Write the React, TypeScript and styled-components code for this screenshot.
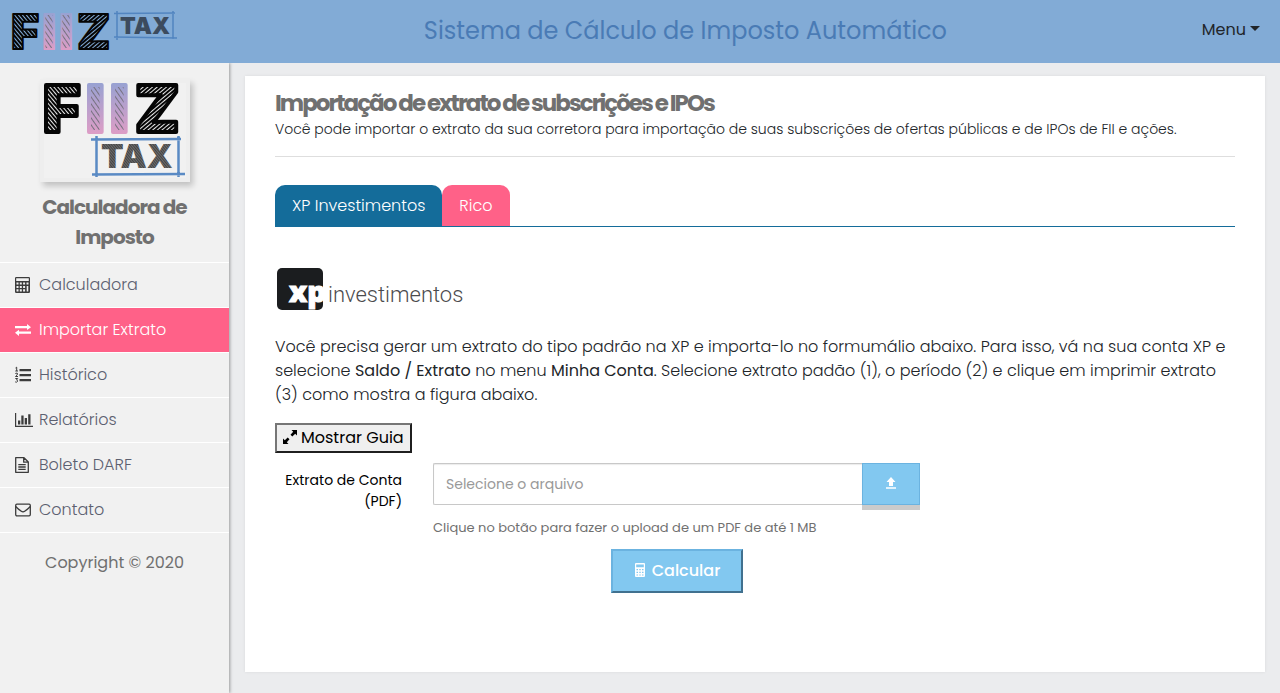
import React from "react";
import styled, { createGlobalStyle } from "styled-components";

const GlobalStyle = createGlobalStyle`
  *, *::before, *::after { box-sizing: border-box; }
  body {
    margin: 0;
    background: #ebecee;
    color: #212529;
    font-family: Poppins, Inter, "Open Sans", sans-serif;
    font-size: 16px;
    line-height: 24px;
  }
  button, input { font-family: inherit; }
`;

const Page = styled.div`
  display: flex;
  flex-direction: column;
  min-height: 100vh;
`;

const TopBar = styled.header`
  display: flex;
  align-items: center;
  height: 63px;
  padding: 0 20px 0 11px;
  background: #82abd6;
`;

const Brand = styled.a`
  display: flex;
`;

const SystemTitle = styled.div`
  flex: 1;
  padding: 0 10px 2px 0;
  text-align: center;
  font-size: 24px;
  line-height: 32px;
  color: #4a7bb5;
`;

const MenuButton = styled.button`
  display: flex;
  align-items: center;
  gap: 4px;
  padding: 0 0 4px;
  border: 0;
  background: none;
  color: #212529;
  font-size: 16px;
  line-height: 24px;

  &::after {
    content: "";
    margin-bottom: 2px;
    border: 5px solid transparent;
    border-top-color: currentColor;
    border-bottom: 0;
  }
`;

const Body = styled.div`
  display: flex;
  flex: 1;
`;

const Sidebar = styled.aside`
  flex: 0 0 229px;
  background: #f1f1f1;
  box-shadow: 1px 0 3px rgba(0, 0, 0, 0.35);
  clip-path: inset(0 -6px 0 0);
  text-align: center;
`;

const LogoCard = styled.div`
  width: 150px;
  height: 103px;
  margin: 16px auto 10px;
  background: #eeeeee;
  box-shadow: 3px 4px 6px rgba(0, 0, 0, 0.2);
`;

const SidebarTitle = styled.h2`
  margin: 0 30px 10px;
  font-size: 20px;
  font-weight: 700;
  line-height: 30px;
  letter-spacing: -1px;
  color: #707070;
`;

const NavList = styled.ul`
  margin: 0;
  padding: 0;
  list-style: none;
  border-top: 1px solid #ffffff;
`;

const NavLink = styled.a<{ $active?: boolean }>`
  display: flex;
  align-items: center;
  gap: 4px;
  height: 45px;
  padding-left: 15px;
  border-bottom: 1px solid #ffffff;
  background: ${(p) => (p.$active ? "#ff6188" : "transparent")};
  color: ${(p) => (p.$active ? "#ffffff" : "#5c6070")};
  font-size: 16px;
  font-weight: 300;
  text-decoration: none;

  svg { color: ${(p) => (p.$active ? "#ffffff" : "#3c3c3c")}; }
`;

const Copyright = styled.p`
  margin: 18px 0;
  color: #707070;
`;

const Main = styled.main`
  flex: 1;
  display: flex;
  min-width: 0;
  padding: 13px 15px 21px 16px;
`;

const Card = styled.section`
  flex: 1;
  min-width: 0;
  padding: 14px 30px;
  background: #ffffff;
  box-shadow: 0 0 3px rgba(0, 0, 0, 0.08);
`;

const Heading = styled.h1`
  margin: 0;
  font-size: 23px;
  font-weight: 700;
  line-height: 26px;
  letter-spacing: -2px;
  color: #707070;
`;

const Lead = styled.p`
  margin: 2px 0 16px;
  font-size: 14px;
  font-weight: 300;
  line-height: 22px;
`;

const Rule = styled.hr`
  margin: 0 0 28px;
  border: 0;
  border-top: 1px solid #dedede;
`;

const Tabs = styled.div`
  display: flex;
  border-bottom: 1px solid #146c9a;
`;

const Tab = styled.button<{ $active?: boolean }>`
  height: 41px;
  padding: 0 17px;
  border: 0;
  border-radius: 10px 10px 0 0;
  background: ${(p) => (p.$active ? "#146c9a" : "#ff6188")};
  color: #ffffff;
  font-size: 16px;
  font-weight: 300;
`;

const Broker = styled.div`
  display: flex;
  padding: 39px 0 23px;
`;

const Instructions = styled.p`
  margin: 0 0 16px;
  font-size: 16px;
  font-weight: 300;

  b { font-weight: 400; }
`;

const GuideButton = styled.button`
  display: flex;
  align-items: center;
  gap: 4px;
  height: 30px;
  padding: 0 6px 2px;
  border: 2px solid;
  border-color: #767676 #1f1f1f #1f1f1f #767676;
  background: #efefef;
  color: #000000;
  font-size: 16px;
`;

const FormRow = styled.form`
  display: flex;
  gap: 31px;
  margin-top: 10px;
`;

const FieldLabel = styled.label`
  flex: 0 0 127px;
  padding-top: 7px;
  text-align: right;
  font-size: 14px;
  line-height: 21px;
  color: #000000;
`;

const Field = styled.div`
  flex: 0 1 487px;
  display: flex;
  flex-direction: column;
`;

const InputGroup = styled.div`
  display: flex;
`;

const FileInput = styled.input`
  flex: 1;
  min-width: 0;
  height: 42px;
  padding: 0 12px;
  border: 1px solid #c8c8c8;
  border-right: 0;
  border-radius: 2px 0 0 2px;
  box-shadow: inset 0 1px 1px rgba(0, 0, 0, 0.08);
  font-size: 14px;

  &::placeholder { color: #999999; opacity: 1; }
`;

const UploadButton = styled.button`
  display: flex;
  align-items: center;
  justify-content: center;
  width: 58px;
  height: 42px;
  padding: 0 0 2px;
  border: 1px solid #6bb3e0;
  background: #82c8f0;
  box-shadow: 0 5px 0 #cbcbcb;
  color: #ffffff;
`;

const Hint = styled.small`
  margin: 13px 0 11px;
  font-size: 13px;
  line-height: 20px;
  color: #707070;
`;

const CalculateButton = styled.button`
  display: flex;
  align-items: center;
  justify-content: center;
  align-self: center;
  gap: 7px;
  width: 132px;
  height: 44px;
  padding: 0 0 2px 2px;
  border: 2px solid;
  border-color: #6bb3e0 #41718f #41718f #6bb3e0;
  background: #82c8f0;
  color: #ffffff;
  font-size: 16px;
  font-weight: 500;
`;

const LogoSvg = styled.svg`
  display: block;
  overflow: visible;
`;

const letter = {
  fontFamily: "Inter, sans-serif",
  fontWeight: 900,
  strokeLinejoin: "round" as const,
};

const LogoDefs = ({ id, hatch, top, bottom }: { id: string; hatch: string; top: number; bottom: number }) => (
  <defs>
    <pattern id={`${id}-ink`} width="3" height="3" patternUnits="userSpaceOnUse" patternTransform="rotate(-40)">
      <rect width="3" height="3" fill="#050505" />
      <rect width="3" height="1" fill={hatch} />
    </pattern>
    <pattern id={`${id}-inkf`} width="3" height="3" patternUnits="userSpaceOnUse" patternTransform="rotate(50)">
      <rect width="3" height="3" fill="#050505" />
      <rect width="3" height="1" fill={hatch} />
    </pattern>
    <pattern id={`${id}-lines`} width="4" height="4" patternUnits="userSpaceOnUse" patternTransform="rotate(55)">
      <rect width="4" height="1" fill="#77717f" />
    </pattern>
    <pattern id={`${id}-gray`} width="2" height="2" patternUnits="userSpaceOnUse" patternTransform="rotate(50)">
      <rect width="2" height="2" fill="#444" />
      <rect width="2" height="1" fill="#6c6c6c" />
    </pattern>
    <linearGradient id={`${id}-fade`} gradientUnits="userSpaceOnUse" x1="0" y1={top} x2="0" y2={bottom}>
      <stop offset="0" stopColor="#98a2d2" />
      <stop offset="1" stopColor="#dc9dc6" />
    </linearGradient>
    <pattern id={`${id}-bars`} width="200" height="110" patternUnits="userSpaceOnUse">
      <rect width="200" height="110" fill={`url(#${id}-fade)`} />
      <rect width="200" height="110" fill={`url(#${id}-lines)`} />
    </pattern>
  </defs>
);

const BarLogo = () => (
  <LogoSvg width="168" height="44" viewBox="0 0 168 44" role="img" aria-label="FIIZ TAX">
    <LogoDefs id="bar" hatch="#82abd6" top={3} bottom={40} />
    <g {...letter} fontSize="48">
      <text x="0" y="39" fill="url(#bar-inkf)" stroke="#050505" strokeWidth="2">F</text>
      <g fill="url(#bar-bars)" stroke="url(#bar-fade)" strokeWidth="2">
        <text x="31" y="39">I</text>
        <text x="48" y="39">I</text>
      </g>
      <text x="66" y="39" fill="url(#bar-ink)" stroke="#050505" strokeWidth="2">Z</text>
    </g>
    <g fill="none" stroke="#5285c0" strokeWidth="1.5">
      <path d="M103 3.5 L164 3 M103 27 L166 28 M106 1 V30 M162 1 V29" />
    </g>
    <text {...letter} x="109" y="24" fontSize="23" fill="#3c4b5e">TAX</text>
  </LogoSvg>
);

const SideLogo = () => (
  <LogoSvg width="150" height="103" viewBox="0 0 150 103" role="img" aria-label="FIIZ TAX">
    <LogoDefs id="side" hatch="#e8e8e8" top={4} bottom={54} />
    <rect x="4" y="4" width="142" height="95" fill="#f1f1f1" />
    <g {...letter} fontSize="64">
      <text x="3" y="53" fill="url(#side-inkf)" stroke="#050505" strokeWidth="4">F</text>
      <g fill="url(#side-bars)" stroke="url(#side-fade)" strokeWidth="4">
        <text x="46" y="53">I</text>
        <text x="70" y="53">I</text>
      </g>
      <text x="95" y="53" fill="url(#side-ink)" stroke="#050505" strokeWidth="4">Z</text>
    </g>
    <g fill="none" stroke="#5a8ac4" strokeWidth="2.5">
      <path d="M51 60.5 L141 60 M52 95.500 L145 95 M56.500 57 V98 M138.500 57 V98" />
    </g>
    <text {...letter} x="61" y="89" fontSize="33" fill="url(#side-gray)">TAX</text>
  </LogoSvg>
);

const XpLogo = () => (
  <LogoSvg width="192" height="46" viewBox="0 0 192 46" role="img" aria-label="XP Investimentos">
    <rect x="2" y="2" width="46" height="42" rx="5" fill="#1b1d1f" />
    <text x="14" y="36" fontFamily="Open Sans, sans-serif" fontWeight="800" fontSize="29" fill="#ffffff" stroke="#ffffff">xp</text>
    <text x="53" y="36" fontFamily="Roboto, sans-serif" fontWeight="300" fontSize="22" fill="#4b4b4d">investimentos</text>
  </LogoSvg>
);

const Icon = ({ children, w = 20, h = 18 }: { children: React.ReactNode; w?: number; h?: number }) => (
  <svg width={w} height={h} viewBox={`0 0 ${w} ${h}`} fill="currentColor" aria-hidden="true">{children}</svg>
);

const CalculatorIcon = () => (
  <Icon>
    <path fillRule="evenodd" d="M1.200 1H13.800Q15 1 15 2.200V15.800Q15 17 13.800 17H1.200Q0 17 0 15.800V2.200Q0 1 1.200 1ZM1.200 2.200V5H13.800V2.200ZM1.500 6.500V8.500H3.500V6.500ZM4.800 6.500V8.500H6.800V6.500ZM8.100 6.500V8.500H10.100V6.500ZM11.500 6.500V8.500H13.500V6.500ZM1.500 9.900V11.900H3.500V9.900ZM4.800 9.900V11.900H6.800V9.900ZM8.100 9.900V11.900H10.100V9.900ZM1.500 13.300V15.500H3.500V13.300ZM4.800 13.300V15.500H6.800V13.300ZM8.100 13.300V15.500H10.100V13.300ZM11.700 10V15.500H13.300V10Z" />
  </Icon>
);

const ExchangeIcon = () => (
  <Icon>
    <path d="M0 5H12V3L16 6.200L12 9V7.300H0ZM16 10.500V12.800H4V15L0 11.700L4 8.800V10.500Z" />
  </Icon>
);

const ListIcon = () => (
  <Icon>
    <path d="M4.500 3H16V5.200H4.500ZM4.500 8H16V10.200H4.500ZM4.500 13H16V15.200H4.500Z" />
    <path fill="none" stroke="currentColor" d="M0.500 2L1.700 1.200V5M0.300 5H3M0.300 7.500Q2.800 6.300 2.500 8Q2.200 9 0.500 10.500H3M0.300 12.500H2.700L1.500 14Q3 14.200 2.500 15.500Q1.600 16.700 0.200 15.900" />
  </Icon>
);

const ChartIcon = () => (
  <Icon>
    <path d="M0 2H1.200V14.800H18V16H0ZM3 9.500H5.300V13.500H3ZM6.300 4.500H8.600V13.500H6.300ZM9.700 7H12V13.500H9.700ZM13.200 3.300H15.500V13.500H13.200Z" />
  </Icon>
);

const FileIcon = () => (
  <Icon>
    <path fill="none" stroke="currentColor" strokeWidth="1.300" strokeLinejoin="round" d="M0.700 1.700H9L13.300 6V16.300H0.700ZM8.700 1.700V6.200H13.300M3.300 8.700H10.700M3.300 11H10.700M3.300 13.300H10.700" />
  </Icon>
);

const MailIcon = () => (
  <Icon>
    <rect x="0.700" y="3.200" width="14.600" height="11.600" rx="1.200" fill="none" stroke="currentColor" strokeWidth="1.300" />
    <path fill="none" stroke="currentColor" strokeWidth="1.300" d="M0.700 5.500Q3 8 6.300 10.200Q8 11.500 9.700 10.200Q13 8 15.300 5.500" />
  </Icon>
);

const ExpandIcon = () => (
  <Icon w={14} h={14}>
    <path d="M8.500 0H14V5.500L12.200 3.800L9.300 6.500L7.500 4.700L10.200 1.800ZM5.500 14H0V8.500L1.800 10.200L4.700 7.500L6.500 9.300L3.800 12.200Z" />
  </Icon>
);

const UploadIcon = () => (
  <Icon w={10} h={12}>
    <path d="M5 0L9.500 5H7V9H3V5H0.500ZM0 10.300H10V11.800H0Z" />
  </Icon>
);

const PocketCalculatorIcon = () => (
  <Icon w={10} h={14}>
    <path fillRule="evenodd" d="M1 0H9Q10 0 10 1V13Q10 14 9 14H1Q0 14 0 13V1Q0 0 1 0ZM1.200 1.500V4.300H8.800V1.500ZM1.500 6V7.200H3V6ZM4.300 6V7.200H5.700V6ZM7 6V7.200H8.500V6ZM1.500 8.700V9.900H3V8.700ZM4.300 8.700V9.900H5.700V8.700ZM7 8.700V9.900H8.500V8.700ZM1.500 11.400V12.600H3V11.400ZM4.300 11.400V12.600H5.700V11.400ZM7 11.400V12.600H8.500V11.400Z" />
  </Icon>
);

const navItems = [
  { label: "Calculadora", icon: <CalculatorIcon /> },
  { label: "Importar Extrato", icon: <ExchangeIcon />, active: true },
  { label: "Histórico", icon: <ListIcon /> },
  { label: "Relatórios", icon: <ChartIcon /> },
  { label: "Boleto DARF", icon: <FileIcon /> },
  { label: "Contato", icon: <MailIcon /> },
];

export default function App() {
  return (
    <Page>
      <GlobalStyle />
      <TopBar>
        <Brand href="#"><BarLogo /></Brand>
        <SystemTitle>Sistema de Cálculo de Imposto Automático</SystemTitle>
        <MenuButton type="button">Menu</MenuButton>
      </TopBar>
      <Body>
        <Sidebar>
          <LogoCard><SideLogo /></LogoCard>
          <SidebarTitle>Calculadora de Imposto</SidebarTitle>
          <nav>
            <NavList>
              {navItems.map((item) => (
                <li key={item.label}>
                  <NavLink href="#" $active={item.active}>{item.icon}{item.label}</NavLink>
                </li>
              ))}
            </NavList>
          </nav>
          <Copyright>Copyright © 2020</Copyright>
        </Sidebar>
        <Main>
          <Card>
            <Heading>Importação de extrato de subscrições e IPOs</Heading>
            <Lead>
              Você pode importar o extrato da sua corretora para importação de suas subscrições de ofertas públicas e de IPOs de FII e ações.
            </Lead>
            <Rule />
            <Tabs role="tablist">
              <Tab type="button" role="tab" aria-selected="true" $active>XP Investimentos</Tab>
              <Tab type="button" role="tab" aria-selected="false">Rico</Tab>
            </Tabs>
            <Broker><XpLogo /></Broker>
            <Instructions>
              Você precisa gerar um extrato do tipo padrão na XP e importa-lo no formumálio abaixo. Para isso, vá na sua conta XP e selecione <b>Saldo / Extrato</b> no menu <b>Minha Conta</b>. Selecione extrato padão (1), o período (2) e clique em imprimir extrato (3) como mostra a figura abaixo.
            </Instructions>
            <GuideButton type="button"><ExpandIcon />Mostrar Guia</GuideButton>
            <FormRow>
              <FieldLabel htmlFor="statement">Extrato de Conta (PDF)</FieldLabel>
              <Field>
                <InputGroup>
                  <FileInput id="statement" type="text" placeholder="Selecione o arquivo" />
                  <UploadButton type="button" aria-label="Enviar arquivo"><UploadIcon /></UploadButton>
                </InputGroup>
                <Hint>Clique no botão para fazer o upload de um PDF de até 1 MB</Hint>
                <CalculateButton type="button"><PocketCalculatorIcon />Calcular</CalculateButton>
              </Field>
            </FormRow>
          </Card>
        </Main>
      </Body>
    </Page>
  );
}
